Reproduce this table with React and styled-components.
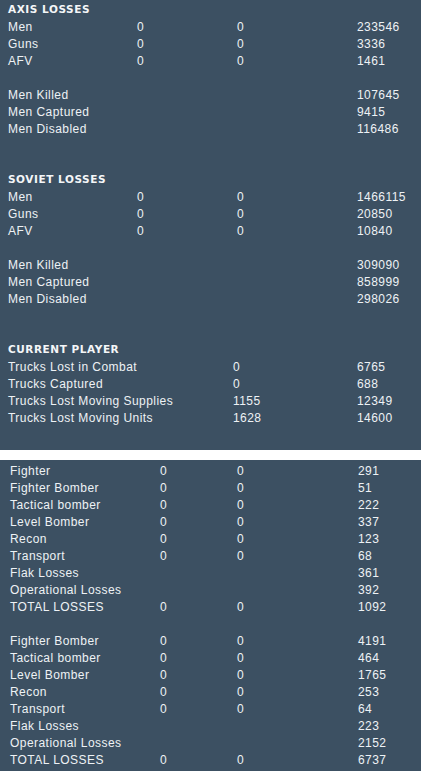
import React from "react";
import styled, { createGlobalStyle } from "styled-components";

const Global = createGlobalStyle`
  html, body { margin: 0; padding: 0; background: #ffffff; }
  body { font-family: "Liberation Sans", Arial, sans-serif; }
`;

const Page = styled.div`
  width: 421px;
  height: 771px;
  overflow: hidden;
  display: flex;
  flex-direction: column;
  gap: 10px;
  background: #ffffff;
`;

const Panel = styled.div`
  background: #3c5062;
  padding: ${(p) => p.$pad};
  flex: ${(p) => (p.$grow ? "1" : "none")};
  color: #eef2f5;
`;

const Table = styled.div`
  display: grid;
  grid-template-columns: ${(p) => p.$cols};
  grid-auto-rows: 17px;
  font-family: "Liberation Sans", Arial, sans-serif;
  font-size: 12px;
  letter-spacing: 0.45px;
  line-height: 17px;
  padding-bottom: ${(p) => p.$gapAfter || 0}px;
`;

const Heading = styled.div`
  grid-column: 1 / -1;
  font-family: "DejaVu Sans", Verdana, sans-serif;
  font-weight: bold;
  font-size: 10.5px;
  letter-spacing: 0.55px;
  line-height: 17px;
  height: 17px;
  color: #f4f6f8;
`;

const Cell = styled.div`
  white-space: nowrap;
  padding-top: 1px;
`;

const Spacer = styled.div`
  grid-column: 1 / -1;
`;

function Rows({ rows }) {
  return rows.map((r, i) =>
    r === null ? (
      <Spacer key={i} />
    ) : (
      r.map((c, j) => <Cell key={i + "-" + j}>{c}</Cell>)
    )
  );
}

const COLS4 = "129px 100px 120px 1fr";
const COLS3 = "225px 124px 1fr";
const COLSB = "150px 77px 121px 1fr";

const axis = [
  ["Men", "0", "0", "233546"],
  ["Guns", "0", "0", "3336"],
  ["AFV", "0", "0", "1461"],
  null,
  ["Men Killed", "", "", "107645"],
  ["Men Captured", "", "", "9415"],
  ["Men Disabled", "", "", "116486"],
];

const soviet = [
  ["Men", "0", "0", "1466115"],
  ["Guns", "0", "0", "20850"],
  ["AFV", "0", "0", "10840"],
  null,
  ["Men Killed", "", "", "309090"],
  ["Men Captured", "", "", "858999"],
  ["Men Disabled", "", "", "298026"],
];

const player = [
  ["Trucks Lost in Combat", "0", "6765"],
  ["Trucks Captured", "0", "688"],
  ["Trucks Lost Moving Supplies", "1155", "12349"],
  ["Trucks Lost Moving Units", "1628", "14600"],
];

const air1 = [
  ["Fighter", "0", "0", "291"],
  ["Fighter Bomber", "0", "0", "51"],
  ["Tactical bomber", "0", "0", "222"],
  ["Level Bomber", "0", "0", "337"],
  ["Recon", "0", "0", "123"],
  ["Transport", "0", "0", "68"],
  ["Flak Losses", "", "", "361"],
  ["Operational Losses", "", "", "392"],
  ["TOTAL LOSSES", "0", "0", "1092"],
  null,
  ["Fighter Bomber", "0", "0", "4191"],
  ["Tactical bomber", "0", "0", "464"],
  ["Level Bomber", "0", "0", "1765"],
  ["Recon", "0", "0", "253"],
  ["Transport", "0", "0", "64"],
  ["Flak Losses", "", "", "223"],
  ["Operational Losses", "", "", "2152"],
  ["TOTAL LOSSES", "0", "0", "6737"],
];

export default function App() {
  return (
    <>
      <Global />
      <Page>
        <Panel $pad="1px 0 7px 8px">
          <Table $cols={COLS4} $gapAfter={34}>
            <Heading>AXIS LOSSES</Heading>
            <Rows rows={axis} />
          </Table>
          <Table $cols={COLS4} $gapAfter={34}>
            <Heading>SOVIET LOSSES</Heading>
            <Rows rows={soviet} />
          </Table>
          <Table $cols={COLS3} $gapAfter={17}>
            <Heading>CURRENT PLAYER</Heading>
            <Rows rows={player} />
          </Table>
        </Panel>
        <Panel $pad="2px 0 0 10px" $grow>
          <Table $cols={COLSB}>
            <Rows rows={air1} />
          </Table>
        </Panel>
      </Page>
    </>
  );
}
